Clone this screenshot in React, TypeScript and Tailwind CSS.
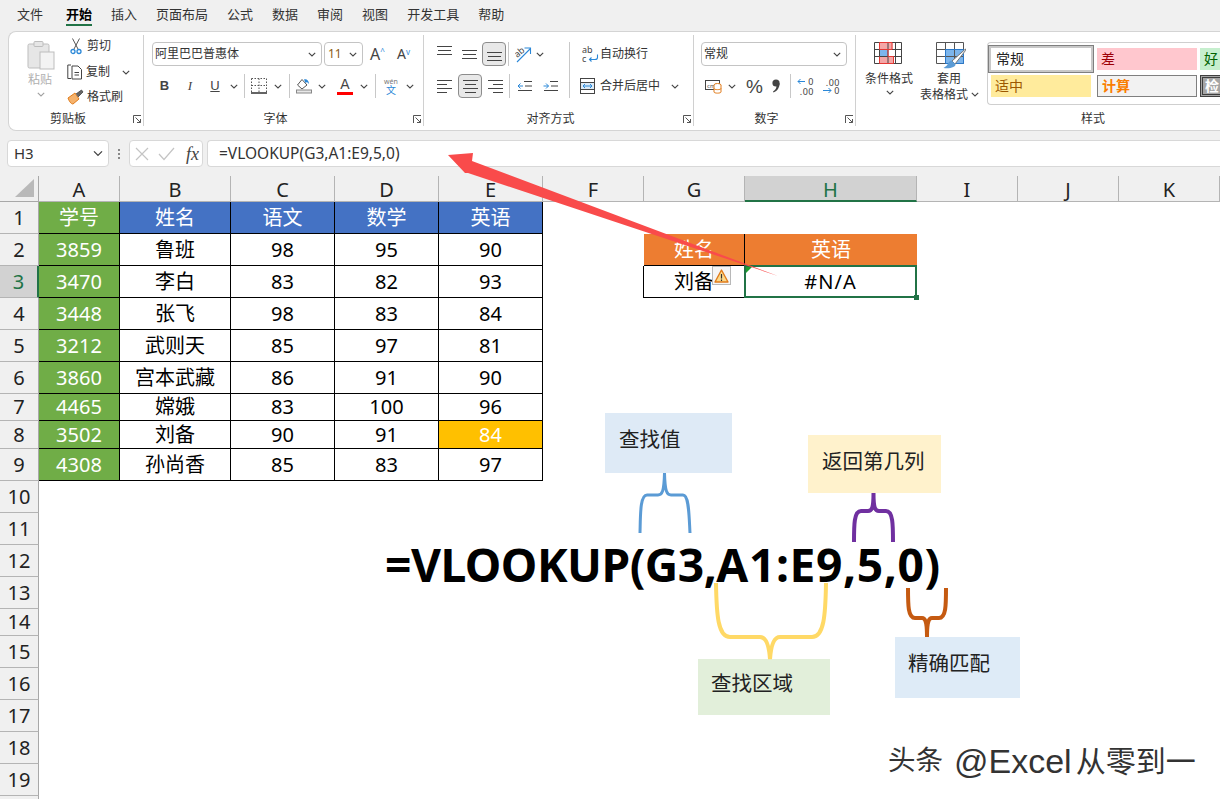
import React from 'react';

const FONT = "font-['Noto_Sans','Noto_Sans_CJK_SC',sans-serif]";

const tabs = ['文件', '开始', '插入', '页面布局', '公式', '数据', '审阅', '视图', '开发工具', '帮助'];

const columns = ['A', 'B', 'C', 'D', 'E', 'F', 'G', 'H', 'I', 'J', 'K'];

const tableRows = [
    ['学号', '姓名', '语文', '数学', '英语'],
    ['3859', '鲁班', '98', '95', '90'],
    ['3470', '李白', '83', '82', '93'],
    ['3448', '张飞', '98', '83', '84'],
    ['3212', '武则天', '85', '97', '81'],
    ['3860', '宫本武藏', '86', '91', '90'],
    ['4465', '嫦娥', '83', '100', '96'],
    ['3502', '刘备', '90', '91', '84'],
    ['4308', '孙尚香', '85', '83', '97'],
];

// small dropdown arrow used all over the ribbon
const Chevron = ({ className = '' }: { className?: string }) => (
    <svg width="8" height="5" viewBox="0 0 8 5" fill="none" stroke="#444" strokeWidth="1.1" className={className}>
        <path d="M0.8 0.8 L4 4 L7.2 0.8" />
    </svg>
);

const Launcher = () => (
    <svg width="8" height="8" viewBox="0 0 8 8" fill="none" stroke="#555" strokeWidth="1">
        <path d="M0.5 8 V0.5 H8" />
        <path d="M2.5 2.5 L7.5 7.5 M7.5 4 V7.5 H4" />
    </svg>
);

const Divider = ({ className = 'h-[24px]' }: { className?: string }) => <div className={`w-px bg-[#c8c8c8] shrink-0 ${className}`} />;

const Group = ({ label, width, children }: { label: string; width: string; children: React.ReactNode }) => (
    <div className={`${width} shrink-0 h-[91px] mt-[3px] flex flex-col border-r border-[#d0d0d0]`}>
        <div className="flex-1 min-h-0">{children}</div>
        <div className="h-[18px] pt-[4px] grid grid-cols-[1fr_auto_1fr_16px] items-center text-[12px] leading-[14px] text-[#333]">
            <span />
            <span>{label}</span>
            <span />
            <span className="justify-self-end pr-[2px] flex"><Launcher /></span>
        </div>
    </div>
);

const Select = ({ text, width, textClass = 'text-[#333]' }: { text: string; width: string; textClass?: string }) => (
    <div className={`${width} h-[24px] bg-white border border-[#c4c4c4] rounded-[4px] flex items-center justify-between pl-[2px] pr-[5px] shrink-0`}>
        <span className={`text-[12px] leading-none ${textClass}`}>{text}</span>
        <Chevron />
    </div>
);

const PasteIcon = () => (
    <svg width="30" height="30" viewBox="0 0 30 30" fill="none">
        <rect x="1" y="4" width="21" height="24" rx="1.5" fill="#e6e6e6" stroke="#bdbdbd" />
        <rect x="7" y="1.5" width="9" height="5" rx="1" fill="#e6e6e6" stroke="#bdbdbd" />
        <rect x="13" y="12" width="14" height="17" fill="#f3f3f3" stroke="#bdbdbd" />
    </svg>
);

const CutIcon = () => (
    <svg width="12" height="17" viewBox="0 0 12 17" fill="none">
        <path d="M2.5 0.5 L8 11 M9.5 0.5 L4 11" stroke="#555" strokeWidth="1" />
        <circle cx="3" cy="13.5" r="2" stroke="#2b88d8" strokeWidth="1.3" />
        <circle cx="9" cy="13.5" r="2" stroke="#2b88d8" strokeWidth="1.3" />
    </svg>
);

const CopyIcon = () => (
    <svg width="16" height="16" viewBox="0 0 16 16" fill="none" stroke="#444" strokeWidth="1">
        <path d="M4 1 H0.8 V14.5 H4" />
        <path d="M5 2 H11 L14.5 5.5 V15 H5 Z" />
        <path d="M7.5 8.5 H12 M7.5 11 H12" />
    </svg>
);

const BrushIcon = () => (
    <svg width="17" height="16" viewBox="0 0 17 16" fill="none">
        <path d="M1 9 L8 4 L12 10 L6 15 C4 15 2 12 1 9 Z" fill="#f6b26b" stroke="#e07b1a" strokeWidth="1" />
        <path d="M9 5 L14.5 1 L16 3 L11 8" fill="#666" stroke="#444" strokeWidth="0.8" />
    </svg>
);

const BorderIcon = () => (
    <svg width="16" height="16" viewBox="0 0 16 16" fill="none" stroke="#555" strokeWidth="1">
        <path d="M0.5 0.5 H15.5 V14 M0.5 0.5 V14 M8 0.5 V14 M0.5 7.5 H15.5" strokeDasharray="1.5 1.5" />
        <path d="M0 15 H16" stroke="#222" strokeWidth="1.4" />
    </svg>
);

const FillIcon = () => (
    <svg width="16" height="16" viewBox="0 0 16 16" fill="none">
        <path d="M6 1.5 L1.5 7 L6 11 L11 7 Z" fill="#fff" stroke="#555" strokeWidth="1" />
        <path d="M8 1.5 C10 0.5 13 2 13 6 L11 4 L9.5 5" fill="#2b88d8" />
        <rect x="0.5" y="12" width="15" height="3" fill="#e8e8e8" stroke="#888" strokeWidth="1" />
    </svg>
);

// three or four horizontal strokes, for the alignment buttons
const Lines = ({ rows }: { rows: [number, number, number][] }) => (
    <svg width="15" height="16" viewBox="0 0 15 16" stroke="#444" strokeWidth="1" fill="none">
        {rows.map(([y, a, b]) => <path key={y} d={`M${a} ${y}.5 H${b}`} />)}
    </svg>
);

const IndentIcon = ({ out }: { out: boolean }) => (
    <svg width="15" height="12" viewBox="0 0 15 12" fill="none" strokeWidth="1">
        <path d="M7 1.5 H15 M8 6 H15 M1 10.5 H15" stroke="#444" />
        {out
            ? <path d="M6 6 H1 M3.5 3.5 L1 6 L3.5 8.5" stroke="#2b88d8" />
            : <path d="M0.5 6 H5.5 M3 3.5 L5.5 6 L3 8.5" stroke="#2b88d8" />}
    </svg>
);

const OrientIcon = () => (
    <div className="w-[17px] h-[18px] flex items-center">
        <svg width="17" height="18" viewBox="0 0 17 18" fill="none">
            <text x="0" y="11" fontSize="9" fill="#444" transform="rotate(-40 4 9)">ab</text>
            <path d="M2 17 L15 4 M9.5 3 H15.5 V9" stroke="#2b88d8" strokeWidth="1.1" />
        </svg>
    </div>
);

const WrapIcon = () => (
    <div className="w-[16px] h-[18px] relative text-[9px] leading-[9px] text-[#444]">
        <span className="block">ab</span>
        <span className="block">c</span>
        <svg width="11" height="8" viewBox="0 0 11 8" fill="none" stroke="#2b88d8" strokeWidth="1.1" className="absolute left-[6px] top-[9px]">
            <path d="M9.5 0.5 V3.5 C9.5 5 8.5 5.5 7 5.5 H1.5 M3.5 3.5 L1.5 5.5 L3.5 7.5" />
        </svg>
    </div>
);

const MergeIcon = () => (
    <svg width="15" height="16" viewBox="0 0 15 16" fill="none">
        <rect x="0.5" y="0.5" width="14" height="15" fill="#fff" stroke="#444" />
        <path d="M0.5 4.5 H14.5 M0.5 11.5 H14.5" stroke="#444" />
        <rect x="1" y="5" width="13" height="6" fill="#dbeaf7" />
        <path d="M3 8 H12 M5 6 L3 8 L5 10 M10 6 L12 8 L10 10" stroke="#2b88d8" strokeWidth="1" />
    </svg>
);

const CurrencyIcon = () => (
    <svg width="17" height="15" viewBox="0 0 17 15" fill="none">
        <rect x="0.5" y="1.5" width="14" height="9" stroke="#444" />
        <text x="2" y="8.5" fontSize="6" fill="#444">cm</text>
        <ellipse cx="12.5" cy="6" rx="3.5" ry="1.5" fill="#fff" stroke="#e07b1a" />
        <path d="M9 6 V13 C9 14.5 16 14.5 16 13 V6 M9 9.5 C9 11 16 11 16 9.5" fill="#fff" stroke="#e07b1a" />
    </svg>
);

const CommaIcon = () => (
    <svg width="8" height="14" viewBox="0 0 8 14" fill="#444">
        <circle cx="4" cy="4" r="3.6" />
        <path d="M7.6 4 C7.8 8 5.5 12 1.5 13.5 L1 12.6 C3.5 11 4.6 9 4.4 7 Z" />
    </svg>
);

const DecimalIcon = ({ more }: { more: boolean }) => (
    <div className="w-[17px] h-[17px] flex flex-col text-[9px] leading-[9px] text-[#444] tracking-[0.5px]">
        {more ? (
            <>
                <div className="flex items-center justify-between h-[8px]">
                    <svg width="8" height="7" viewBox="0 0 8 7" fill="none" stroke="#2b88d8"><path d="M8 3.5 H1 M3.5 1 L1 3.5 L3.5 6" /></svg>
                    <span>0</span>
                </div>
                <div className="text-right h-[9px] pt-[1px]">.00</div>
            </>
        ) : (
            <>
                <div className="text-right h-[8px]">.00</div>
                <div className="flex items-center justify-between h-[9px] pt-[1px]">
                    <svg width="9" height="7" viewBox="0 0 9 7" fill="none" stroke="#2b88d8"><path d="M0 3.5 H8 M5.5 1 L8 3.5 L5.5 6" /></svg>
                    <span>0</span>
                </div>
            </>
        )}
    </div>
);

const CondFormatIcon = () => (
    <svg width="28" height="22" viewBox="0 0 28 22" fill="none">
        <rect x="5.5" y="0.5" width="13" height="7" fill="#f4a6a6" />
        <rect x="5.5" y="14.5" width="14" height="7" fill="#f4a6a6" />
        <rect x="6" y="7.5" width="8" height="7" fill="#7cb5ec" />
        <path d="M0.5 0.5 H27.5 V21.5 H0.5 Z M0.5 7.5 H27.5 M0.5 14.5 H27.5 M5.5 0.5 V21.5 M14 0.5 V21.5 M21.5 0.5 V21.5" stroke="#444" />
        <path d="M5.5 0.5 H18 V7.5 H14 V14.5 H19.5 V21.5 H5.5 V14.5 M5.5 7.5 V0.5 M5.5 7.5 H14" stroke="#e53935" />
    </svg>
);

const TableStyleIcon = () => (
    <svg width="30" height="27" viewBox="0 0 30 27" fill="none">
        <rect x="9.5" y="7.5" width="18" height="14" fill="#7cb5ec" />
        <path d="M0.5 0.5 H27.5 V21.5 H0.5 Z M0.5 7.5 H27.5 M0.5 14.5 H27.5 M9.5 0.5 V21.5 M18.5 0.5 V21.5" stroke="#555" />
        <path d="M9.5 7.5 H27.5 V21.5 H9.5 Z" stroke="#2b78c8" />
        <path d="M29.5 7 L16 19 L19 22 L29.5 8.5 Z" fill="#fff" stroke="#777" />
        <path d="M15.5 18.5 C12 19 13 23 7.5 26 C14 27 20 25 19.5 22 Z" fill="#5b9bd5" />
    </svg>
);

const WarningIcon = () => (
    <div className="w-[19px] h-[19px] border border-[#b8b8b8] bg-[#f5f5f5] flex items-center justify-center">
        <svg width="15" height="14" viewBox="0 0 15 14">
            <path d="M7.5 1 L14 13 H1 Z" fill="#fbd98a" stroke="#e07b1a" strokeWidth="1.4" strokeLinejoin="round" />
            <path d="M7.5 5 V9.5 M7.5 10.5 V12" stroke="#333" strokeWidth="1.2" />
        </svg>
    </div>
);

const Ribbon = () => (
    <div className="ml-[8px] h-[100px] bg-white border border-r-0 border-[#d4d4d4] rounded-l-[8px] flex">
        {/* 剪贴板 */}
        <Group label="剪贴板" width="w-[135px]">
            <div className="flex">
                <div className="w-[62px] pl-[18px] pt-[5px] flex flex-col">
                    <PasteIcon />
                    <span className="text-[12px] leading-[16px] text-[#b0b0b0] mt-[2px] ml-[1px]">粘贴</span>
                    <Chevron className="ml-[10px] mt-[4px] opacity-50" />
                </div>
                <div className="flex flex-col text-[12px] text-[#333]">
                    <div className="h-[22px] flex items-center gap-[5px]"><span className="w-[12px] ml-[-1px] flex"><CutIcon /></span><span>剪切</span></div>
                    <div className="h-[30px] flex items-center gap-[3px] ml-[-4px]"><CopyIcon /><span>复制</span><Chevron className="ml-[9px]" /></div>
                    <div className="h-[20px] flex items-center gap-[3px] ml-[-4px]"><BrushIcon /><span>格式刷</span></div>
                </div>
            </div>
        </Group>

        {/* 字体 */}
        <Group label="字体" width="w-[280px]">
            <div className="pl-[8px] pt-[7px] flex items-center">
                <Select text="阿里巴巴普惠体" width="w-[170px]" />
                <Select text="11" width="w-[39px] ml-[2px]" textClass="text-[#8a5a14] pl-[1px]" />
                <span className="w-[18px] ml-[7px] text-[16px] leading-none text-[#444] flex items-start">A<span className="text-[8px] text-[#2b88d8] leading-[10px]">^</span></span>
                <span className="w-[18px] ml-[9px] text-[14px] leading-none text-[#444] flex items-start">A<span className="text-[8px] text-[#2b88d8] leading-[10px]">v</span></span>
            </div>
            <div className="pl-[8px] mt-[8px] h-[24px] flex items-center text-[#444]">
                <span className="w-[25px] text-center text-[13px] font-bold font-['Liberation_Sans']">B</span>
                <span className="w-[26px] text-center text-[13px] italic font-['Liberation_Serif']">I</span>
                <span className="w-[24px] text-center text-[13px] underline font-['Liberation_Sans']">U</span>
                <span className="w-[14px] flex justify-center"><Chevron /></span>
                <Divider className="h-[24px] ml-[3px]" />
                <span className="ml-[6px]"><BorderIcon /></span>
                <span className="w-[22px] flex justify-center"><Chevron /></span>
                <Divider />
                <span className="ml-[6px]"><FillIcon /></span>
                <span className="w-[20px] flex justify-center"><Chevron /></span>
                <span className="w-[18px] ml-[4px] flex flex-col items-center text-[14px] leading-[13px] font-['Liberation_Sans']">A<span className="w-[16px] h-[3px] mt-[1px] bg-[#ff0000]" /></span>
                <span className="w-[18px] ml-[1px] flex justify-center"><Chevron /></span>
                <Divider className="h-[24px] ml-[2px]" />
                <span className="w-[16px] ml-[7px] flex flex-col items-center leading-none">
                    <span className="text-[7px] text-[#777]">wén</span>
                    <span className="text-[10px] text-[#2b88d8]">文</span>
                </span>
                <span className="w-[20px] ml-[1px] flex justify-center"><Chevron /></span>
            </div>
        </Group>

        {/* 对齐方式 */}
        <Group label="对齐方式" width="w-[270px]">
            <div className="flex pt-[7px] pl-[13px]">
                <div className="flex flex-col gap-[8px]">
                    <div className="flex items-center h-[24px]">
                        <span className="w-[15px] mr-[10px] flex items-center self-start pt-[3px]"><Lines rows={[[1, 0, 15], [5, 1, 14], [9, 0, 15]]} /></span>
                        <span className="w-[15px] mr-[3px] flex"><Lines rows={[[4, 0, 15], [8, 1, 14], [12, 0, 15]]} /></span>
                        <span className="w-[24px] h-[24px] ml-[2px] border border-[#8c8c8c] rounded-[4px] bg-[#e8e8e8] flex items-center justify-center"><Lines rows={[[6, 0, 15], [10, 1, 14], [14, 0, 15]]} /></span>
                        <Divider className="h-[24px] ml-[2px]" />
                        <span className="ml-[6px]"><OrientIcon /></span>
                        <span className="w-[16px] flex justify-center"><Chevron /></span>
                    </div>
                    <div className="flex items-center h-[24px]">
                        <span className="w-[15px] mr-[3px] flex"><Lines rows={[[2, 0, 15], [6, 0, 10], [10, 0, 15], [14, 0, 10]]} /></span>
                        <span className="w-[24px] h-[24px] ml-[3px] border border-[#8c8c8c] rounded-[4px] bg-[#e8e8e8] flex items-center justify-center"><Lines rows={[[2, 0, 15], [6, 2, 13], [10, 0, 15], [14, 2, 13]]} /></span>
                        <span className="w-[15px] ml-[6px] flex"><Lines rows={[[2, 0, 15], [6, 5, 15], [10, 0, 15], [14, 5, 15]]} /></span>
                        <Divider className="h-[24px] ml-[6px]" />
                        <span className="ml-[7px]"><IndentIcon out /></span>
                        <span className="ml-[11px]"><IndentIcon out={false} /></span>
                    </div>
                </div>
                <Divider className="ml-[11px] h-[56px]" />
                <div className="ml-[12px] flex flex-col gap-[8px] text-[12px] text-[#333]">
                    <div className="h-[24px] flex items-center gap-[2px]"><WrapIcon /><span>自动换行</span></div>
                    <div className="h-[24px] flex items-center gap-[5px] ml-[-2px]"><MergeIcon /><span>合并后居中</span><Chevron className="ml-[6px]" /></div>
                </div>
            </div>
        </Group>

        {/* 数字 */}
        <Group label="数字" width="w-[162px]">
            <div className="pl-[7px] pt-[7px]">
                <Select text="常规" width="w-[146px]" />
            </div>
            <div className="pl-[11px] mt-[8px] h-[24px] flex items-center">
                <CurrencyIcon />
                <span className="w-[20px] flex justify-center"><Chevron /></span>
                <span className="w-[16px] ml-[4px] text-[19px] leading-none text-[#444] font-['Liberation_Sans']">%</span>
                <span className="w-[8px] ml-[10px] flex"><CommaIcon /></span>
                <Divider className="h-[24px] ml-[10px]" />
                <span className="ml-[6px]"><DecimalIcon more /></span>
                <span className="ml-[9px]"><DecimalIcon more={false} /></span>
            </div>
        </Group>

        {/* 样式 */}
        <div className="flex-1 min-w-0 h-[91px] mt-[3px] flex flex-col">
            <div className="flex-1 min-h-0 flex">
                <div className="w-[65px] shrink-0 pl-[9px] flex flex-col text-[12px] text-[#333]">
                    <div className="h-[35px] pt-[7px] pl-[9px] shrink-0"><CondFormatIcon /></div>
                    <span className="leading-[15px] mt-[1px]">条件格式</span>
                    <Chevron className="ml-[21px] mt-[4px]" />
                </div>
                <div className="w-[66px] shrink-0 flex flex-col text-[12px] text-[#333]">
                    <div className="h-[35px] pt-[7px] pl-[15px] shrink-0"><TableStyleIcon /></div>
                    <span className="leading-[15px] mt-[1px] pl-[16px]">套用</span>
                    <span className="leading-[15px] mt-[1px] ml-[-1px] whitespace-nowrap flex items-center">表格格式<Chevron className="ml-[3px]" /></span>
                </div>
                <div className="flex-1 h-[63px] mt-[7px] bg-white border border-r-0 border-[#cfcfcf] rounded-l-[4px] pt-[2px] overflow-hidden">
                    <div className="grid grid-cols-[106px_106px_40px] gap-y-[2px] text-[14px] leading-none">
                        <div className="h-[28px] w-[106px] border-[3px] border-[#c8c8c8] outline outline-1 outline-offset-[-1px] outline-[#7f7f7f] flex items-center pl-[5px] text-[#222]">常规</div>
                        <div className="h-[22px] w-[100px] mt-[3px] ml-[3px] bg-[#ffc7ce] flex items-center pl-[4px] text-[#9c0006]">差</div>
                        <div className="h-[22px] w-[40px] mt-[3px] bg-[#c6efce] flex items-center pl-[4px] text-[#006100]">好</div>
                        <div className="h-[22px] w-[100px] ml-[3px] bg-[#ffeb9c] flex items-center pl-[4px] text-[#9c5700]">适中</div>
                        <div className="h-[22px] w-[100px] ml-[3px] bg-[#f2f2f2] border border-[#7f7f7f] flex items-center pl-[4px] font-bold text-[#fa7d00]">计算</div>
                        <div className="h-[22px] w-[40px] bg-[#a5a5a5] border-[3px] border-double border-[#3f3f3f] flex items-center pl-[2px] text-white font-bold">检</div>
                    </div>
                </div>
            </div>
            <div className="h-[18px] pt-[4px] pl-[225px] flex items-center text-[12px] leading-[14px] text-[#333]">样式</div>
        </div>
    </div>
);

const FormulaBar = () => (
    <div className="h-[45px] flex items-start pt-[9px] pl-[7px]">
        <div className="w-[102px] h-[27px] bg-white border border-[#d8d8d8] rounded-[4px] flex items-center justify-between pl-[6px] pr-[6px] text-[15px] text-[#333]">
            <span>H3</span>
            <Chevron className="scale-125" />
        </div>
        <div className="w-[20px] h-[27px] flex flex-col items-center justify-center gap-[2px]">
            <span className="w-[2px] h-[2px] bg-[#888]" />
            <span className="w-[2px] h-[2px] bg-[#888]" />
            <span className="w-[2px] h-[2px] bg-[#888]" />
        </div>
        <div className="w-[74px] h-[27px] bg-white border border-[#d8d8d8] rounded-[4px] flex items-center pl-[5px]">
            <svg width="14" height="14" viewBox="0 0 14 14" stroke="#c4c4c4" strokeWidth="1.2" fill="none"><path d="M1 1 L13 13 M13 1 L1 13" /></svg>
            <svg width="17" height="14" viewBox="0 0 17 14" stroke="#c4c4c4" strokeWidth="1.2" fill="none" className="ml-[9px]"><path d="M1 7 L6 12.5 L16 1" /></svg>
            <span className="ml-[11px] text-[18px] leading-none italic font-['Liberation_Serif'] text-[#444]">fx</span>
        </div>
        <div className="ml-[4px] flex-1 h-[27px] bg-white border border-r-0 border-[#d8d8d8] rounded-l-[4px] flex items-center pl-[11px] text-[15.5px] text-[#333]">
            =VLOOKUP(G3,A1:E9,5,0)
        </div>
    </div>
);

// one sheet cell of the student table
const tableCellClass = (row: number, col: number) => {
    let c = 'flex items-center justify-center border-r border-b border-black text-[20px] leading-none ';
    if (col === 0) c += 'bg-[#70ad47] text-white ';
    else if (row === 0) c += 'bg-[#4472c4] text-white ';
    else if (row === 7 && col === 4) c += 'bg-[#ffc000] text-white ';
    else c += 'bg-white text-black ';
    return c;
};

const Sheet = () => {
    const cells: React.ReactNode[] = [];
    for (let r = 0; r < 20; r++) {
        const num = r + 1;
        const active = num === 3;
        cells.push(
            <div
                key={`h${r}`}
                className={`flex items-center justify-center text-[20px] leading-none border-b border-[#b4b4b4] border-r ${active ? 'bg-[#d2d2d2] text-[#217346] border-r-[2px] border-r-[#217346]' : 'bg-[#f0f0f0] text-[#222] border-r-[#a8a8a8]'}`}
            >
                {num < 20 ? num : ''}
            </div>
        );
        for (let c = 0; c < 11; c++) {
            const key = `c${r}-${c}`;
            if (r < 9 && c < 5) {
                cells.push(<div key={key} className={tableCellClass(r, c)}>{tableRows[r][c]}</div>);
            } else if (r === 2 && c === 5) {
                cells.push(<div key={key} className="bg-white border-r border-black" />);
            } else if (r === 1 && c === 6) {
                cells.push(<div key={key} className="flex items-center justify-center bg-[#ed7d31] text-white text-[20px] leading-none border-r border-b border-black">姓名</div>);
            } else if (r === 1 && c === 7) {
                cells.push(<div key={key} className="flex items-center justify-center bg-[#ed7d31] text-white text-[20px] leading-none">英语</div>);
            } else if (r === 2 && c === 6) {
                cells.push(
                    <div key={key} className="relative bg-white flex items-center justify-center text-[20px] leading-none text-black border-r border-b border-black">
                        刘备
                        <span className="absolute left-[68px] top-[0px]"><WarningIcon /></span>
                    </div>
                );
            } else if (r === 2 && c === 7) {
                cells.push(
                    <div key={key} className="relative z-10 -ml-px -mt-px bg-white flex items-center justify-center text-[20px] leading-none tracking-[1px] text-black border-2 border-[#217346]">
                        #N/A
                        <span className="absolute left-0 top-0 w-0 h-0 border-t-[6px] border-r-[6px] border-t-[#1e9e2e] border-r-transparent" />
                        <span className="absolute right-[-4px] bottom-[-4px] w-[5px] h-[5px] bg-[#217346]" />
                    </div>
                );
            } else {
                cells.push(<div key={key} className="bg-white" />);
            }
        }
    }

    return (
        <div className="grid grid-cols-[39px_81px_111px_104px_104px_104px_101px_101px_172px_101px_101px_101px] grid-rows-[26px_32px_32px_32px_32px_32px_32px_27px_28px_32px_32px_32px_32px_32px_27px_32px_32px_32px_32px_32px_32px]">
            <div className="bg-[#f0f0f0] border-r border-b border-[#a8a8a8] flex items-end justify-end pr-[4px] pb-[4px]">
                <div className="w-0 h-0 border-b-[18px] border-l-[19px] border-b-[#b9b9b9] border-l-transparent" />
            </div>
            {columns.map((col) => (
                <div
                    key={col}
                    className={`flex items-center justify-center text-[20px] leading-none pt-[3px] ${col === 'H' ? 'bg-[#d2d2d2] text-[#217346] border-b-[2px] border-[#217346]' : 'bg-[#f0f0f0] text-[#222] border-b border-[#a8a8a8]'} border-r ${col === 'H' ? 'border-r-[#b4b4b4]' : 'border-[#b4b4b4]'}`}
                >
                    {col}
                </div>
            ))}
            {cells}
        </div>
    );
};

const Callout = ({ text, className }: { text: string; className: string }) => (
    <div className={`absolute text-[20.5px] leading-none text-[#222] ${className}`}>{text}</div>
);

// the red arrow and the four curly braces drawn on top of the sheet
const Annotations = () => (
    <svg width="1220" height="799" viewBox="0 0 1220 799" fill="none" className="absolute left-0 top-0 z-20 pointer-events-none">
        <path d="M778 276 L472 161 L473 153 L448 155 L465 173 L468 173 Z" fill="#f94b4b" />
        <path d="M640 533 C640.5 515 640 495 647 495 L658 495 C662 495 664 492 664.5 473 C665 492 667 495 671 495 L683 495 C689 495 689 515 690 533" stroke="#5b9bd5" strokeWidth="3" />
        <path d="M854 542 C854 525 854 511 861 511 L868 511 C872 511 873.5 508 873.5 493 C873.5 508 875 511 879 511 L886 511 C893 511 893 525 893 542" stroke="#7030a0" strokeWidth="4" />
        <path d="M716 583 C716.5 615 718 637 730 637 L760 637 C766 637 769 645 770 659 C771 645 774 637 780 637 L812 637 C824 637 825.5 615 826 583" stroke="#ffd966" strokeWidth="4" />
        <path d="M908 588 C908 605 908 618 915 618 L922 618 C925 618 927 621 927 637 C927 621 929 618 932 618 L939 618 C946 618 946 605 946 588" stroke="#c55a11" strokeWidth="4" />
    </svg>
);

export default function App() {
    return (
        <div className={`relative w-[1220px] h-[799px] overflow-hidden bg-[#f0f0f0] ${FONT}`}>
            <div className="h-[31px] flex items-start pl-[17px] pt-[4px] text-[13px] leading-[20px] text-[#333]">
                {tabs.map((tab, i) => (
                    <div key={tab} className={`${i === 1 ? 'ml-[23px] mr-[19px] font-bold border-b-2 border-[#217346] h-[22px] text-black' : i === 0 ? '' : i === 9 ? 'ml-0' : 'mr-[19px]'}`}>
                        {tab}
                    </div>
                ))}
            </div>
            <Ribbon />
            <FormulaBar />
            <Sheet />

            <Annotations />

            <Callout text="查找值" className="left-[605px] top-[413px] w-[127px] h-[60px] bg-[#deeaf6] pl-[14px] pt-[16px]" />
            <Callout text="返回第几列" className="left-[808px] top-[435px] w-[133px] h-[58px] bg-[#fff2cc] pl-[14px] pt-[16px]" />
            <Callout text="查找区域" className="left-[698px] top-[659px] w-[132px] h-[56px] bg-[#e2efda] pl-[13px] pt-[14px]" />
            <Callout text="精确匹配" className="left-[895px] top-[637px] w-[125px] h-[61px] bg-[#deebf7] pl-[13px] pt-[16px]" />

            <div className="absolute left-[385px] top-[535px] text-[46.2px] leading-[60px] font-bold text-black whitespace-nowrap">
                <span className="tracking-[-0.5px]">=VLOOKUP(G3,</span>
                <span className="tracking-[0.6px]">A1:E9,5,0)</span>
            </div>

            <div className="absolute left-[888px] top-[741px] h-[40px] flex items-center text-[#333] whitespace-nowrap font-['Liberation_Sans','Noto_Sans_CJK_SC',sans-serif] [text-shadow:1px_1px_0_#fff]">
                <span className="text-[27.5px] mr-[11px]">头条</span>
                <span className="text-[34px]">@Excel</span>
                <span className="text-[30px] ml-[4px]">从零到一</span>
            </div>
        </div>
    );
}
